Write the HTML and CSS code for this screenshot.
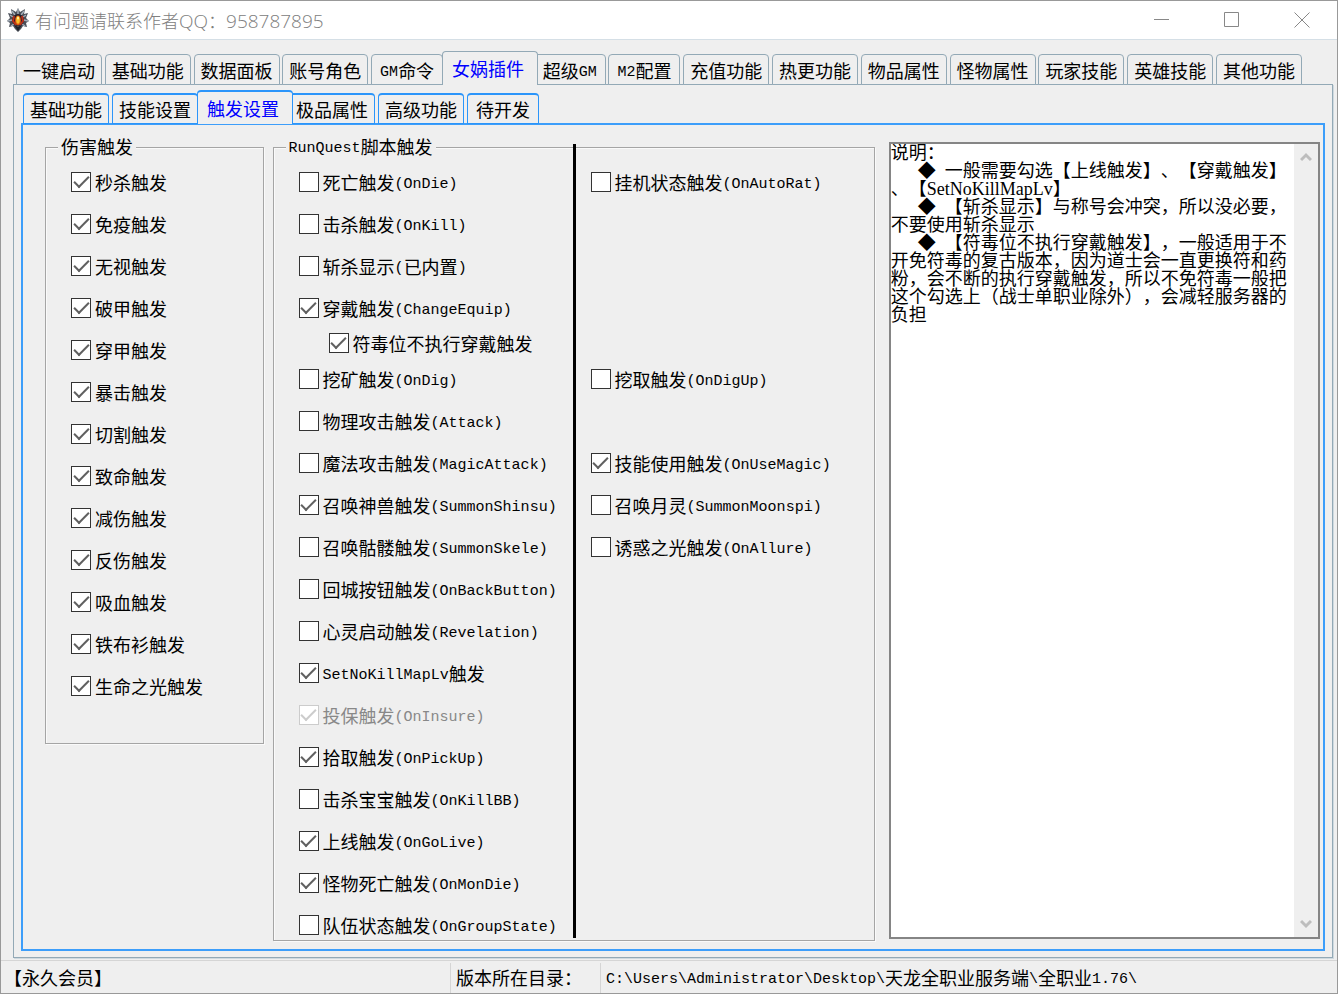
FILE: index.html
```html
<!DOCTYPE html>
<html lang="zh-CN">
<head>
<meta charset="utf-8">
<title>有问题请联系作者QQ：958787895</title>
<link rel="stylesheet" href="styles.css">
</head>
<body>
<div class="window">
  <header class="titlebar">
    <svg class="logo" viewBox="0 0 24 24" aria-hidden="true">
      <path d="M12 0l2 4 5-3-1 5 4-1-2 5 3 3-3 2 1 4-4-1-2 3-3 3-3-3-2-3-4 1 1-4-3-2 3-3-2-5 4 1-1-5 5 3z" fill="#4a4f58"/>
      <path d="M6 3l3 4M18 3l-3 4M2 13l4-1M22 13l-4-1M12 1v5M5 18l3-2M19 18l-3-2M4 7l3 2M20 7l-3 2" stroke="#a3adb8" stroke-width="1.500"/>
      <circle cx="12" cy="12" r="6" fill="#25202a"/>
      <path d="M8 8l-1 5 3 4M16 8l1 5-3 4" stroke="#b8301c" stroke-width="2" fill="none"/>
      <ellipse cx="12" cy="12.500" rx="3" ry="5" fill="#d8550f"/>
      <ellipse cx="12" cy="12" rx="1.800" ry="3.800" fill="#fbc02a"/>
      <ellipse cx="12" cy="10" rx="1" ry="1.500" fill="#fff3a0"/>
      <path d="M8 17l4 2 4-2-4 6z" fill="#1f2129"/>
    </svg>
    <h1 class="title">有问题请联系作者<span class="title-latin">QQ</span>：<span class="title-latin">958787895</span></h1>
    <div class="controls">
      <button class="control" aria-label="最小化"><svg viewBox="0 0 16 16"><path d="M0 7.5h15"/></svg></button>
      <button class="control" aria-label="最大化"><svg viewBox="0 0 16 16"><path d="M.5 .5h14v14H.5z"/></svg></button>
      <button class="control" aria-label="关闭"><svg viewBox="0 0 16 16"><path d="M.5 .5l15 15M15.500 .5l-15 15"/></svg></button>
    </div>
  </header>

  <main class="workspace">
    <div class="tabs tabs-main" role="tablist">
      <button class="tab" role="tab">一键启动</button>
      <button class="tab" role="tab">基础功能</button>
      <button class="tab" role="tab">数据面板</button>
      <button class="tab" role="tab">账号角色</button>
      <button class="tab" role="tab"><span class="en">GM</span>命令</button>
      <button class="tab selected" role="tab" aria-selected="true">女娲插件</button>
      <button class="tab" role="tab">超级<span class="en">GM</span></button>
      <button class="tab" role="tab"><span class="en">M2</span>配置</button>
      <button class="tab" role="tab">充值功能</button>
      <button class="tab" role="tab">热更功能</button>
      <button class="tab" role="tab">物品属性</button>
      <button class="tab" role="tab">怪物属性</button>
      <button class="tab" role="tab">玩家技能</button>
      <button class="tab" role="tab">英雄技能</button>
      <button class="tab" role="tab">其他功能</button>
    </div>
    <section class="page">
      <div class="tabs tabs-sub" role="tablist">
        <button class="tab" role="tab">基础功能</button>
        <button class="tab" role="tab">技能设置</button>
        <button class="tab selected" role="tab" aria-selected="true">触发设置</button>
        <button class="tab" role="tab">极品属性</button>
        <button class="tab" role="tab">高级功能</button>
        <button class="tab" role="tab">待开发</button>
      </div>
      <div class="subpage">
        <fieldset class="group damage">
          <legend>伤害触发</legend>
          <div class="damage-list">
            <label class="check"><input type="checkbox" checked>秒杀触发</label>
            <label class="check"><input type="checkbox" checked>免疫触发</label>
            <label class="check"><input type="checkbox" checked>无视触发</label>
            <label class="check"><input type="checkbox" checked>破甲触发</label>
            <label class="check"><input type="checkbox" checked>穿甲触发</label>
            <label class="check"><input type="checkbox" checked>暴击触发</label>
            <label class="check"><input type="checkbox" checked>切割触发</label>
            <label class="check"><input type="checkbox" checked>致命触发</label>
            <label class="check"><input type="checkbox" checked>减伤触发</label>
            <label class="check"><input type="checkbox" checked>反伤触发</label>
            <label class="check"><input type="checkbox" checked>吸血触发</label>
            <label class="check"><input type="checkbox" checked>铁布衫触发</label>
            <label class="check"><input type="checkbox" checked>生命之光触发</label>
          </div>
        </fieldset>

        <fieldset class="group quest">
          <legend><span class="en">RunQuest</span>脚本触发</legend>
          <div class="quest-grid">
            <label class="check"><input type="checkbox">死亡触发<span class="en">(OnDie)</span></label>
            <label class="check"><input type="checkbox">击杀触发<span class="en">(OnKill)</span></label>
            <label class="check"><input type="checkbox">斩杀显示<span class="en">(</span>已内置<span class="en">)</span></label>
            <label class="check"><input type="checkbox" checked>穿戴触发<span class="en">(ChangeEquip)</span></label>
            <label class="check nested"><input type="checkbox" checked>符毒位不执行穿戴触发</label>
            <label class="check"><input type="checkbox">挖矿触发<span class="en">(OnDig)</span></label>
            <label class="check"><input type="checkbox">物理攻击触发<span class="en">(Attack)</span></label>
            <label class="check"><input type="checkbox">魔法攻击触发<span class="en">(MagicAttack)</span></label>
            <label class="check"><input type="checkbox" checked>召唤神兽触发<span class="en">(SummonShinsu)</span></label>
            <label class="check"><input type="checkbox">召唤骷髅触发<span class="en">(SummonSkele)</span></label>
            <label class="check"><input type="checkbox">回城按钮触发<span class="en">(OnBackButton)</span></label>
            <label class="check"><input type="checkbox">心灵启动触发<span class="en">(Revelation)</span></label>
            <label class="check"><input type="checkbox" checked><span class="en">SetNoKillMapLv</span>触发</label>
            <label class="check disabled"><input type="checkbox" checked disabled>投保触发<span class="en">(OnInsure)</span></label>
            <label class="check"><input type="checkbox" checked>拾取触发<span class="en">(OnPickUp)</span></label>
            <label class="check"><input type="checkbox">击杀宝宝触发<span class="en">(OnKillBB)</span></label>
            <label class="check"><input type="checkbox" checked>上线触发<span class="en">(OnGoLive)</span></label>
            <label class="check"><input type="checkbox" checked>怪物死亡触发<span class="en">(OnMonDie)</span></label>
            <label class="check"><input type="checkbox">队伍状态触发<span class="en">(OnGroupState)</span></label>
            <div class="divider"></div>
            <label class="check right row-1"><input type="checkbox">挂机状态触发<span class="en">(OnAutoRat)</span></label>
            <label class="check right row-6"><input type="checkbox">挖取触发<span class="en">(OnDigUp)</span></label>
            <label class="check right row-8"><input type="checkbox" checked>技能使用触发<span class="en">(OnUseMagic)</span></label>
            <label class="check right row-9"><input type="checkbox">召唤月灵<span class="en">(SummonMoonspi)</span></label>
            <label class="check right row-10"><input type="checkbox">诱惑之光触发<span class="en">(OnAllure)</span></label>
          </div>
        </fieldset>

        <div class="memo">
          <textarea class="memo-text" aria-label="说明" spellcheck="false">说明：
　  ◆  一般需要勾选【上线触发】、【穿戴触发】、【SetNoKillMapLv】
　  ◆  【斩杀显示】与称号会冲突，所以没必要，不要使用斩杀显示
　  ◆  【符毒位不执行穿戴触发】，一般适用于不开免符毒的复古版本，因为道士会一直更换符和药粉，会不断的执行穿戴触发，所以不免符毒一般把这个勾选上（战士单职业除外），会减轻服务器的负担</textarea>
          <div class="scrollbar">
            <button class="arrow" aria-label="向上滚动"><svg viewBox="0 0 12 10"><path d="M1 8l5-5 5 5"/></svg></button>
            <button class="arrow" aria-label="向下滚动"><svg viewBox="0 0 12 10"><path d="M1 2l5 5 5-5"/></svg></button>
          </div>
        </div>
      </div>
    </section>
  </main>

  <footer class="statusbar">
    <div class="status member">【永久会员】</div>
    <div class="status folder">版本所在目录：</div>
    <div class="status path"><span class="en">C:\Users\Administrator\Desktop\</span>天龙全职业服务端<span class="en">\</span>全职业<span class="en">1.76\</span></div>
  </footer>
</div>
</body>
</html>
```
FILE: styles.css
```css
* {
  box-sizing: border-box;
}

body {
  margin: 0;
  background: #efefef;
  color: #000;
  font: 18px/24px "Noto Sans CJK SC", sans-serif;
  text-spacing-trim: space-all;
}

button {
  margin: 0;
  padding: 0;
  border: 0;
  background: none;
  color: inherit;
  font: inherit;
}

.en {
  font-family: "Liberation Mono", monospace;
  font-size: 15px;
  line-height: 1;
  vertical-align: 2px;
}

.window {
  display: flex;
  flex-direction: column;
  min-height: 100vh;
  border: 1px solid #999;
}

/* Title bar */
.titlebar {
  display: flex;
  align-items: center;
  height: 39px;
  padding-left: 5px;
  border-bottom: 1px solid #d5dfe6;
  background: #fff;
}

.logo {
  width: 24px;
  height: 24px;
  margin-right: 5px;
}

.title {
  flex: 1;
  margin: 0;
  color: #808080;
  font-size: 18px;
  font-weight: 300;
}

.title-latin {
  font-family: "Open Sans", sans-serif;
  font-size: 19px;
  line-height: 1;
}

.controls {
  display: flex;
}

.control {
  display: grid;
  place-items: center;
  width: 70px;
  height: 38px;
}

.control svg {
  width: 16px;
  height: 16px;
  fill: none;
  stroke: #888;
}

/* Tabs */
.workspace {
  display: flex;
  flex: 1;
  flex-direction: column;
  padding: 11px 4px 2px 12px;
}

.tabs {
  position: relative;
  z-index: 1;
  display: flex;
  align-items: flex-end;
  height: 34px;
  margin-bottom: -1px;
}

.tabs-main {
  --line: #93a9b6;
  justify-content: space-between;
  max-width: 1290px;
  margin-right: 31px;
  padding-left: 3px;
}

.tabs-sub {
  --line: #2b95fa;
  gap: 3px;
  padding-left: 2px;
}

.tab {
  min-width: 72px;
  height: 31px;
  padding: 0 6px;
  border: 1px solid var(--line);
  border-radius: 4px 4px 0 0;
  background: #efefef;
  white-space: nowrap;
}

.tab.selected {
  z-index: 1;
  height: 34px;
  margin: 0 -7px 0 -4px;
  padding: 0 13px 1px 9px;
  border-bottom: 0;
  color: #00f;
}

.tabs-sub .tab {
  border-top-width: 2px;
}

.page {
  display: flex;
  flex: 1;
  flex-direction: column;
  padding: 5px 7px 6px;
  border: 1px solid #93a9b6;
  box-shadow: 1px 1px #cfd9df;
}

.subpage {
  display: flex;
  flex: 1;
  align-items: flex-start;
  padding: 10px 3px 8px 22px;
  border: 2px solid #3d9efa;
}

/* Option groups */
.group {
  min-width: 0;
  margin: 0;
  padding: 12px 0 0;
  border: 1px solid #a5a5a5;
  box-shadow: 1px 1px #fafafa, inset 1px 1px #fafafa;
}

.group legend {
  height: 24px;
  margin-left: 12px;
  padding: 0 3px;
  background: #efefef;
  line-height: 22px;
}

.damage {
  flex: 218 1 0;
  margin-right: 9px;
}

.damage-list {
  display: grid;
  gap: 18px;
  padding: 0 0 44px 25px;
}

.quest {
  flex: 604 1 0;
  margin-right: 14px;
}

.quest-grid {
  display: grid;
  grid-template-columns: 274px 3px 1fr;
  grid-template-rows: repeat(3, 42px) 35px 36px repeat(13, 42px) 24px;
  align-items: start;
  padding: 0 0 2px 25px;
}

.check {
  display: block;
  grid-column: 1;
  height: 24px;
  line-height: 22px;
  white-space: nowrap;
}

.check input {
  appearance: none;
  float: left;
  display: grid;
  place-items: center;
  width: 20px;
  height: 20px;
  margin: 1px 4px 0 0;
  border: 1px solid #333;
  background: #fff;
}

.check input:checked::before {
  content: "";
  width: 13px;
  height: 6px;
  border: solid #606060;
  border-width: 0 0 2px 2px;
  transform: translateY(-2px) rotate(-45deg);
}

.check.nested {
  margin-left: 30px;
}

.check.disabled {
  color: #888;
}

.check.disabled input {
  border-color: #ccc;
}

.check.disabled input::before {
  border-color: #ccc;
}

.check.right {
  grid-column: 3;
  margin-left: 15px;
}

.row-1 { grid-row: 1; }
.row-6 { grid-row: 6; }
.row-8 { grid-row: 8; }
.row-9 { grid-row: 9; }
.row-10 { grid-row: 10; }

.divider {
  grid-row: 1 / -1;
  grid-column: 2;
  align-self: stretch;
  margin-top: -27px;
  background: #000;
}

/* Notes box */
.memo {
  display: flex;
  flex: 430 1 0;
  align-self: stretch;
  margin: 7px 0 2px;
  border: 2px solid #858585;
  background: #fff;
}

.memo-text {
  flex: 1;
  min-width: 0;
  padding: 0;
  border: 0;
  outline: 0;
  background: none;
  color: #000;
  font: 18px/18px "Liberation Serif", "Noto Sans CJK SC", serif;
  line-break: anywhere;
  overflow: hidden;
  resize: none;
  text-spacing-trim: space-all;
}

.scrollbar {
  display: flex;
  flex-direction: column;
  justify-content: space-between;
  width: 24px;
  background: #efefef;
}

.arrow {
  display: grid;
  place-items: center;
  height: 26px;
}

.arrow svg {
  width: 12px;
  height: 10px;
  fill: none;
  stroke: #bdbdbd;
  stroke-width: 3;
}

/* Status bar */
.statusbar {
  display: flex;
  height: 33px;
  border-top: 1px solid #d5d5d5;
}

.status {
  margin-top: 2px;
  padding: 2px 5px;
  border-left: 1px solid #d5d5d5;
  white-space: nowrap;
}

.member {
  width: 449px;
  padding-left: 3px;
  border-left: 0;
}

.folder {
  width: 150px;
}

.path {
  flex: 1;
}
```
